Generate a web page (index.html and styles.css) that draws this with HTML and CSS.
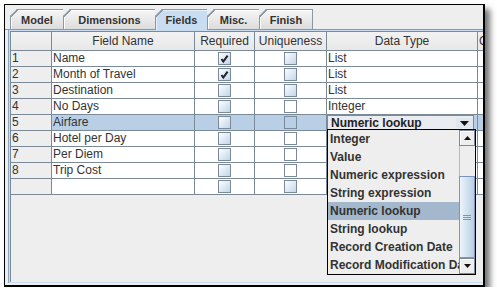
FILE: index.html
```html
<!doctype html>
<html lang="en">
  <head>
    <meta charset="UTF-8" />
    <title>Fields</title>
    <link rel="stylesheet" href="styles.css">
  </head>
  <body>
    <div class="window">
      <div class="tabs">
        <div class="tab tab-model">Model</div>
        <div class="tab tab-dims">Dimensions</div>
        <div class="tab tab-fields is-selected">Fields</div>
        <div class="tab tab-misc">Misc.</div>
        <div class="tab tab-finish">Finish</div>
      </div>

      <div class="tabContent">
        <div class="scrollPane">
          <table class="grid">
            <colgroup>
              <col class="col-num">
              <col class="col-name">
              <col class="col-req">
              <col class="col-uniq">
              <col class="col-type">
              <col class="col-more">
            </colgroup>
            <thead>
              <tr>
                <th></th>
                <th>Field Name</th>
                <th>Required</th>
                <th>Uniqueness</th>
                <th>Data Type</th>
                <th class="clipped">O</th>
              </tr>
            </thead>
            <tbody>
              <tr>
                <td class="rowNum">1</td>
                <td>Name</td>
                <td class="center"><span class="check"><svg width="11" height="11" viewBox="0 0 11 11"><path d="M2.5 6 L4.3 8.6 L8.6 2.6" fill="none" stroke="#222" stroke-width="2"/></svg></span></td>
                <td class="center"><span class="check"></span></td>
                <td>List</td>
                <td></td>
              </tr>
              <tr>
                <td class="rowNum">2</td>
                <td>Month of Travel</td>
                <td class="center"><span class="check"><svg width="11" height="11" viewBox="0 0 11 11"><path d="M2.5 6 L4.3 8.6 L8.6 2.6" fill="none" stroke="#222" stroke-width="2"/></svg></span></td>
                <td class="center"><span class="check"></span></td>
                <td>List</td>
                <td></td>
              </tr>
              <tr>
                <td class="rowNum">3</td>
                <td>Destination</td>
                <td class="center"><span class="check"></span></td>
                <td class="center"><span class="check"></span></td>
                <td>List</td>
                <td></td>
              </tr>
              <tr>
                <td class="rowNum">4</td>
                <td>No Days</td>
                <td class="center"><span class="check"></span></td>
                <td class="center"><span class="check is-plain"></span></td>
                <td>Integer</td>
                <td></td>
              </tr>
              <tr class="is-selected">
                <td class="rowNum">5</td>
                <td>Airfare</td>
                <td class="center"><span class="check"></span></td>
                <td class="center"><span class="check is-muted"></span></td>
                <td class="typeCell">
                  <div class="combo">
                    <span class="comboText">Numeric lookup</span>
                    <span class="comboArrow"><svg width="9" height="5" viewBox="0 0 9 5"><path d="M0 0 H9 L4.5 5 Z" fill="#111"/></svg></span>
                  </div>
                </td>
                <td></td>
              </tr>
              <tr>
                <td class="rowNum">6</td>
                <td>Hotel per Day</td>
                <td class="center"><span class="check"></span></td>
                <td class="center"><span class="check is-plain"></span></td>
                <td></td>
                <td></td>
              </tr>
              <tr>
                <td class="rowNum">7</td>
                <td>Per Diem</td>
                <td class="center"><span class="check"></span></td>
                <td class="center"><span class="check is-plain"></span></td>
                <td></td>
                <td></td>
              </tr>
              <tr>
                <td class="rowNum">8</td>
                <td>Trip Cost</td>
                <td class="center"><span class="check"></span></td>
                <td class="center"><span class="check is-plain"></span></td>
                <td></td>
                <td></td>
              </tr>
              <tr>
                <td class="rowNum"></td>
                <td></td>
                <td class="center"><span class="check"></span></td>
                <td class="center"><span class="check"></span></td>
                <td></td>
                <td></td>
              </tr>
            </tbody>
          </table>
        </div>
      </div>

      <!-- open combo popup -->
      <div class="popup">
        <div class="popupList">
          <div class="popupItem">Integer</div>
          <div class="popupItem">Value</div>
          <div class="popupItem">Numeric expression</div>
          <div class="popupItem">String expression</div>
          <div class="popupItem is-selected">Numeric lookup</div>
          <div class="popupItem">String lookup</div>
          <div class="popupItem">Record Creation Date</div>
          <div class="popupItem">Record Modification Date</div>
        </div>
        <div class="scrollbar">
          <div class="sbButton"><svg width="7" height="4" viewBox="0 0 7 4"><path d="M0 4 H7 L3.5 0 Z" fill="#111"/></svg></div>
          <div class="sbTrack"></div>
          <div class="sbThumb"><svg width="8" height="5" viewBox="0 0 8 5"><path d="M0 0.5 H8 M0 2.5 H8 M0 4.5 H8" stroke="#7d95b8" stroke-width="1"/></svg></div>
          <div class="sbButton"><svg width="7" height="4" viewBox="0 0 7 4"><path d="M0 0 H7 L3.5 4 Z" fill="#111"/></svg></div>
        </div>
      </div>
    </div>
  </body>
</html>
```

FILE: styles.css
```css
body {
  margin: 0;
  background: #fff;
  font-family: "Liberation Sans", Arial, sans-serif;
  font-size: 12px;
  color: #333;
}

.window {
  position: relative;
  display: flex;
  flex-direction: column;
  width: 478px;
  height: 280px;
  margin: 4px 0 0 4px;
  border: 1px solid #000;
  border-right-width: 2px;
  border-bottom-width: 2px;
  background: #eeeeee;
  box-shadow: 5px 5px 6px rgba(0, 0, 0, .55);
  overflow: hidden;
}

/* tab strip */
.tabs {
  display: flex;
  align-items: flex-start;
  height: 20px;
  padding: 4px 0 0 5px;
  border-bottom: 1px solid #8a97a4;
}
.tab {
  position: relative;
  box-sizing: border-box;
  display: flex;
  align-items: center;
  justify-content: center;
  height: 20px;
  border: 1px solid #8a97a4;
  border-right: 0;
  border-bottom: 0;
  background: linear-gradient(#f6f6f6, #dcdcdc);
  box-shadow: inset 1px 1px 0 #fff;
  font-size: 11px;
  font-weight: bold;
  color: #333;
  clip-path: polygon(7px 0, 100% 0, 100% 100%, 0 100%, 0 7px);
}
.tab::before {
  content: "";
  position: absolute;
  left: -1px;
  top: -1px;
  width: 8px;
  height: 8px;
  background: linear-gradient(to bottom right, transparent 43%, #8a97a4 43%, #8a97a4 57%, transparent 57%);
}
.tab.is-selected {
  height: 21px;
  background: #c8ddf2;
  box-shadow: inset 1px 1px 0 #e4eef9;
}
.tab-model { width: 53px; }
.tab-dims { width: 92px; }
.tab-fields { width: 52px; }
.tab-misc { width: 52px; }
.tab-finish { width: 54px; border-right: 1px solid #8a97a4; }

/* content */
.tabContent {
  flex: 1;
  display: flex;
  margin: 0 0 2px 3px;
  padding: 1px 0 1px 1px;
  border-left: 1px solid #8da4bd;
  background: #c8ddf2;
}
.scrollPane {
  flex: 1;
  border-top: 1px solid #7a8a99;
  border-left: 1px solid #7a8a99;
  background: #eeeeee;
  overflow: hidden;
}

.grid {
  table-layout: fixed;
  width: 520px;
  border-collapse: separate;
  border-spacing: 0;
}
.col-num { width: 41px; }
.col-name { width: 143px; }
.col-req { width: 60px; }
.col-uniq { width: 72px; }
.col-type { width: 151px; }
.col-more { width: 53px; }

.grid th,
.grid td {
  padding: 0 1px;
  border-right: 1px solid #7a8a99;
  border-bottom: 1px solid #7a8a99;
  white-space: nowrap;
  overflow: hidden;
}
.grid th {
  height: 16px;
  padding-top: 1px;
  line-height: 17px;
  font-weight: normal;
  background: linear-gradient(#f2f2f2, #e8e8e8);
  text-align: center;
}
.grid th.clipped {
  text-align: left;
}
.grid td {
  height: 15px;
  line-height: 15px;
  background: #fff;
}
.grid td.rowNum {
  background: #eeeeee;
}
.grid tr.is-selected td:not(.rowNum) {
  background: #b8cfe5;
}
.grid td.center {
  text-align: center;
}

.check {
  display: inline-block;
  box-sizing: border-box;
  width: 13px;
  height: 13px;
  margin-top: 1px;
  vertical-align: top;
  border: 1px solid #7a8a99;
  background: linear-gradient(135deg, #fdfeff, #c3d5e9);
}
.check svg {
  display: block;
}
.check.is-plain {
  background: #fff;
}
.check.is-muted {
  background: #b8cfe5;
}

.grid td.typeCell {
  padding: 0;
}
.combo {
  display: flex;
  align-items: center;
  box-sizing: border-box;
  height: 15px;
  margin-right: 3px;
  border: 1px solid #7a8a99;
  border-bottom: 0;
  background: #e9edf2;
}
.comboText {
  flex: 1;
  padding-left: 3px;
  font-size: 12px;
  font-weight: bold;
  line-height: 15px;
  color: #222;
}
.comboArrow {
  display: flex;
  align-items: center;
  justify-content: center;
  width: 17px;
  height: 10px;
  background: #dfe6ee;
}

/* popup list of the open combo */
.popup {
  position: absolute;
  left: 322px;
  top: 124px;
  display: flex;
  width: 147px;
  height: 144px;
  border: 1px solid #000;
  background: #eeeeee;
}
.popupList {
  flex: 1;
  overflow: hidden;
}
.popupItem {
  height: 18px;
  padding-left: 2px;
  line-height: 18px;
  font-size: 12px;
  font-weight: bold;
  color: #333;
  white-space: nowrap;
}
.popupItem.is-selected {
  background: #a3b8cc;
}

.scrollbar {
  display: flex;
  flex-direction: column;
  width: 16px;
}
.sbButton {
  display: flex;
  align-items: center;
  justify-content: center;
  box-sizing: border-box;
  height: 16px;
  border: 1px solid #7a8a99;
  background: #eeeeee;
  box-shadow: inset 1px 1px 0 #fff;
}
.sbTrack {
  height: 30px;
  border-left: 1px solid #b0bcc8;
  background: #eeeeee;
}
.sbThumb {
  flex: 1;
  display: flex;
  align-items: center;
  justify-content: center;
  border: 1px solid #7d95b8;
  background: linear-gradient(to right, #eef4fa, #b8cfe5);
}
```
